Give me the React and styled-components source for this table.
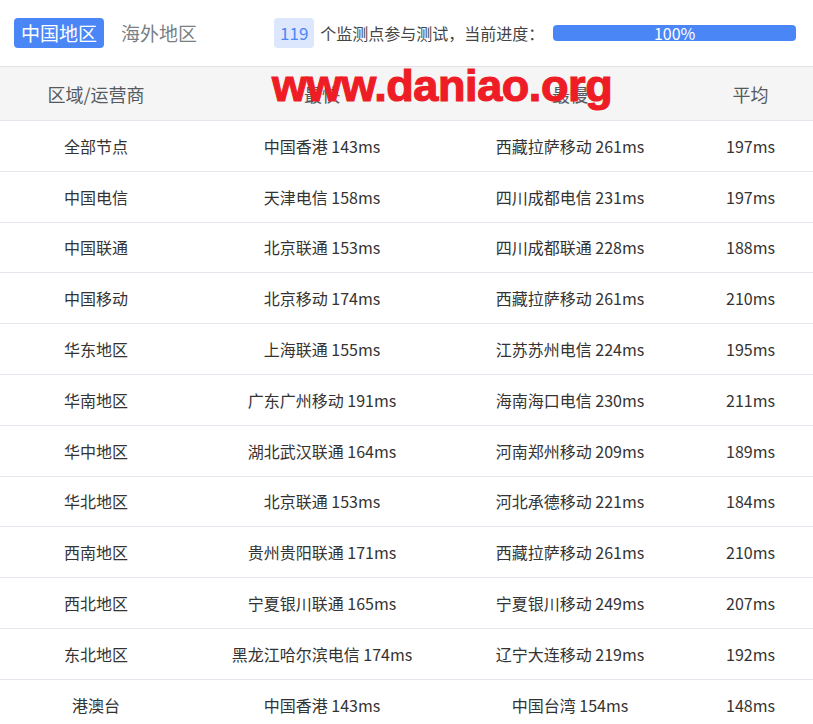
import styled, { createGlobalStyle } from "styled-components";

const GlobalStyle = createGlobalStyle`
  html, body {
    margin: 0;
    padding: 0;
    background: #fff;
    font-family: "Noto Sans CJK SC", "Noto Sans", sans-serif;
    overflow: hidden;
  }
`;

const Page = styled.div`
  position: relative;
  width: 813px;
`;

const TopBar = styled.div`
  display: flex;
  align-items: center;
  height: 67px;
  padding: 0 17px 0 14px;
  box-sizing: border-box;
  border-bottom: 1px solid #e2e2e2;
`;

const Tab = styled.div`
  height: 30px;
  line-height: 30px;
  padding: 0 7px;
  margin-right: 10px;
  font-size: 19px;
  border-radius: 4px;
  color: ${({ active }) => (active ? "#fff" : "#7a7f85")};
  background: ${({ active }) => (active ? "#4b86f7" : "transparent")};
`;

const Badge = styled.span`
  margin-left: 60px;
  height: 30px;
  line-height: 30px;
  padding: 0 6px;
  border-radius: 4px;
  background: #dce7fd;
  color: #4b86f7;
  font-size: 17px;
`;

const Note = styled.span`
  margin-left: 6px;
  font-size: 16px;
  color: #444;
`;

const Progress = styled.div`
  flex: 1;
  margin-left: 9px;
  height: 16px;
  line-height: 16px;
  border-radius: 4px;
  background: #4b86f7;
  color: #fff;
  font-size: 16px;
  text-align: center;
`;

const Table = styled.table`
  width: 813px;
  border-collapse: collapse;
  table-layout: fixed;
`;

const Th = styled.th`
  height: 53px;
  padding: 0;
  background: #f5f5f5;
  font-weight: normal;
  font-size: 18px;
  color: #555a60;
  text-align: center;
  border-bottom: 1px solid #e4e7ed;
`;

const Td = styled.td`
  height: 49.8px;
  padding: 0;
  font-size: 16px;
  color: #333;
  text-align: center;
  border-bottom: 1px solid #e4e7ed;
`;

const Watermark = styled.div`
  position: absolute;
  left: 272px;
  top: 60px;
  font-family: "Liberation Sans", Arial, sans-serif;
  font-weight: bold;
  font-size: 45px;
  color: #ee1c25;
  letter-spacing: -0.4px;
  -webkit-text-stroke: 1.2px #ee1c25;
  pointer-events: none;
`;

const rows = [
  ["全部节点", "中国香港 143ms", "西藏拉萨移动 261ms", "197ms"],
  ["中国电信", "天津电信 158ms", "四川成都电信 231ms", "197ms"],
  ["中国联通", "北京联通 153ms", "四川成都联通 228ms", "188ms"],
  ["中国移动", "北京移动 174ms", "西藏拉萨移动 261ms", "210ms"],
  ["华东地区", "上海联通 155ms", "江苏苏州电信 224ms", "195ms"],
  ["华南地区", "广东广州移动 191ms", "海南海口电信 230ms", "211ms"],
  ["华中地区", "湖北武汉联通 164ms", "河南郑州移动 209ms", "189ms"],
  ["华北地区", "北京联通 153ms", "河北承德移动 221ms", "184ms"],
  ["西南地区", "贵州贵阳联通 171ms", "西藏拉萨移动 261ms", "210ms"],
  ["西北地区", "宁夏银川联通 165ms", "宁夏银川移动 249ms", "207ms"],
  ["东北地区", "黑龙江哈尔滨电信 174ms", "辽宁大连移动 219ms", "192ms"],
  ["港澳台", "中国香港 143ms", "中国台湾 154ms", "148ms"],
];

export default function App() {
  return (
    <Page>
      <GlobalStyle />
      <TopBar>
        <Tab active>中国地区</Tab>
        <Tab>海外地区</Tab>
        <Badge>119</Badge>
        <Note>个监测点参与测试，当前进度：</Note>
        <Progress>100%</Progress>
      </TopBar>
      <Table>
        <colgroup>
          <col style={{ width: 192 }} />
          <col style={{ width: 260 }} />
          <col style={{ width: 236 }} />
          <col style={{ width: 125 }} />
        </colgroup>
        <thead>
          <tr>
            <Th>区域/运营商</Th>
            <Th>最快</Th>
            <Th>最慢</Th>
            <Th>平均</Th>
          </tr>
        </thead>
        <tbody>
          {rows.map((r) => (
            <tr key={r[0]}>
              {r.map((c, i) => (
                <Td key={i}>{c}</Td>
              ))}
            </tr>
          ))}
        </tbody>
      </Table>
      <Watermark>www.daniao.org</Watermark>
    </Page>
  );
}
